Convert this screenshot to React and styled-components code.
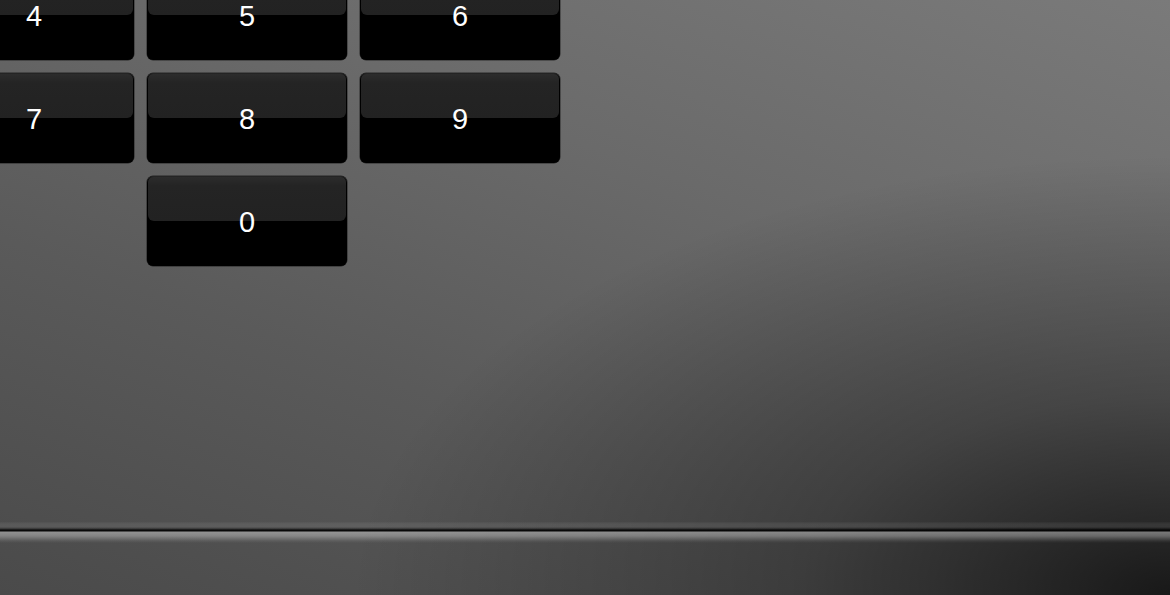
import React from "react";
import styled, { createGlobalStyle } from "styled-components";

const Global = createGlobalStyle`
  html, body { margin: 0; padding: 0; overflow: hidden; }
  body { font-family: "Liberation Sans", Arial, sans-serif; }
`;

const Page = styled.div`
  width: 1170px;
  height: 595px;
  overflow: hidden;
  display: flex;
  flex-direction: column;
  background:
    radial-gradient(ellipse 820px 440px at 1170px 595px, rgba(0,0,0,0.74) 0%, rgba(0,0,0,0.32) 45%, rgba(0,0,0,0) 100%),
    linear-gradient(200deg, #7a7a7a 0%, #6a6a6a 35%, #5a5a5a 65%, #4a4a4a 100%);
`;

const Keypad = styled.div`
  display: grid;
  grid-template-columns: repeat(3, 200px);
  grid-auto-rows: 90px;
  gap: 13px;
  margin: -30px 0 0 -66px;
`;

const Key = styled.button`
  position: relative;
  border: none;
  padding: 0;
  margin: 0;
  border-radius: 6px;
  background: #000;
  box-shadow: inset 0 1px 0 rgba(255,255,255,0.14), 0 0 0 0.5px rgba(0,0,0,0.6);
  color: #fff;
  font-family: "Liberation Sans", Arial, sans-serif;
  font-size: 29px;
  line-height: 1;
  display: flex;
  align-items: center;
  justify-content: center;
  grid-column: ${(p) => p.$col || "auto"};
  overflow: hidden;

  &::before {
    content: "";
    position: absolute;
    left: 1px;
    right: 1px;
    top: 1px;
    height: 44px;
    border-radius: 5px 5px 6px 6px;
    background: linear-gradient(to bottom, #2c2c2c 0%, #242424 20%, #222 100%);
  }
`;

const Label = styled.span`
  position: relative;
  top: 1px;
`;

const Spacer = styled.div`
  flex: 1;
`;

const Footer = styled.div`
  height: 73px;
  flex: none;
  background: linear-gradient(
    to bottom,
    rgba(255,255,255,0.02) 0px,
    rgba(255,255,255,0.07) 2px,
    rgba(255,255,255,0.07) 5px,
    rgba(0,0,0,0.35) 7px,
    rgba(0,0,0,0.9) 8px,
    rgba(0,0,0,0.9) 9px,
    rgba(255,255,255,0.38) 10px,
    rgba(255,255,255,0.3) 14px,
    rgba(255,255,255,0.06) 19px,
    rgba(255,255,255,0) 21px
  );
`;

const keys = ["4", "5", "6", "7", "8", "9"];

export default function App() {
  return (
    <>
      <Global />
      <Page>
        <Keypad>
          {keys.map((k) => (
            <Key key={k}>
              <Label>{k}</Label>
            </Key>
          ))}
          <Key $col="2">
            <Label>0</Label>
          </Key>
        </Keypad>
        <Spacer />
        <Footer />
      </Page>
    </>
  );
}
